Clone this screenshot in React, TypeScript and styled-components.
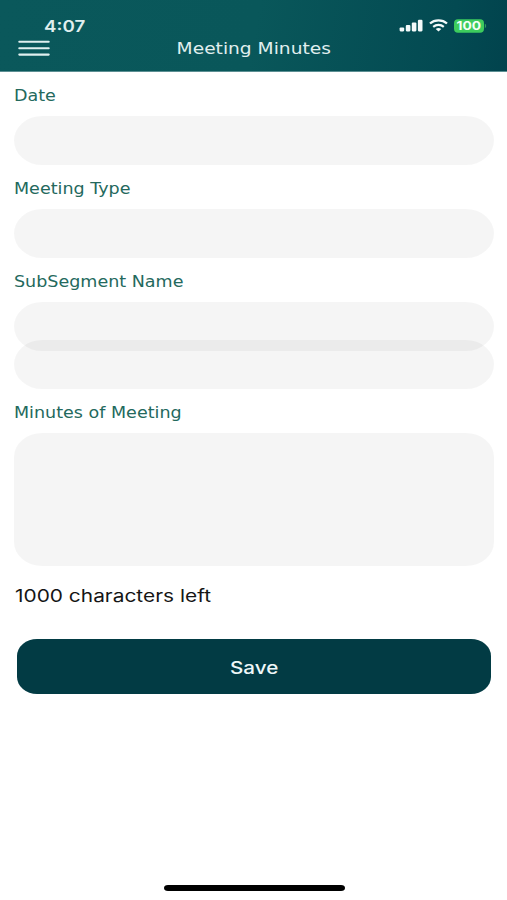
import React from "react";
import styled, { createGlobalStyle } from "styled-components";

const GlobalStyle = createGlobalStyle`
  * { box-sizing: border-box; }
  body { margin: 0; background: #fff; }
`;

const Screen = styled.div`
  width: 507px;
  height: 900px;
  display: flex;
  flex-direction: column;
  overflow: hidden;
  background: #fff;
`;

const Header = styled.header`
  height: 72px;
  flex: none;
  color: #e0efef;
  background: linear-gradient(100deg, #0a585b 0%, #09575a 50%, #034a52 88%, #01434d 100%);
  border-bottom: 1px solid #5c8f93;
`;

const StatusBar = styled.div`
  height: 37px;
  padding: 16px 20px 0 43.5px;
  display: flex;
  justify-content: space-between;
`;

const Wide = styled.span<{ $scale: number }>`
  display: inline-block;
  white-space: nowrap;
  transform: scaleX(${(p) => p.$scale});
  transform-origin: left center;
`;

const Clock = styled(Wide)`
  font: 600 15.6px/21px Inter, sans-serif;
`;

const StatusIcons = styled.div`
  display: flex;
  align-items: flex-start;
  gap: 6px;
  padding-top: 3px;
`;

const NavBar = styled.div`
  display: grid;
  grid-template-columns: 50px 1fr 50px;
  padding: 0 0 0 18px;
  height: 24px;
`;

const MenuButton = styled.button`
  width: 32px;
  height: 20px;
  padding: 0;
  border: 0;
  background: none;
  display: block;
`;

const Title = styled(Wide)`
  font: 400 15.4px/25px "DejaVu Sans", sans-serif;
  transform-origin: center;
  justify-self: center;
  margin-right: 18px;
`;

const Form = styled.main`
  padding: 11px 13px 0 14px;
  display: flex;
  flex-direction: column;
`;

const Field = styled.div<{ $height: number }>`
  height: ${(p) => p.$height}px;
`;

const Label = styled.label`
  display: block;
  height: 33px;
  color: #24695d;
`;

const LabelText = styled(Wide)`
  font: 400 15px/27px "DejaVu Sans", sans-serif;
`;

const Input = styled.input`
  display: block;
  width: 100%;
  height: 49px;
  border: 0;
  outline: 0;
  padding: 0 20px;
  border-radius: 28px / 24.5px;
  background: rgba(0, 0, 0, 0.04);

  & + & {
    margin-top: -11px;
  }
`;

const TextArea = styled.textarea`
  display: block;
  width: 100%;
  height: 133px;
  border: 0;
  outline: 0;
  resize: none;
  padding: 16px 20px;
  border-radius: 28px / 24px;
  background: rgba(0, 0, 0, 0.04);
`;

const Counter = styled.div`
  height: 73px;
  padding: 17px 0 0 0.5px;
  color: #151515;
`;

const CounterText = styled(Wide)`
  font: 400 17.3px/25px Inter, sans-serif;
`;

const SaveButton = styled.button`
  height: 55px;
  margin: 0 3px;
  padding: 2px 0 0;
  border: 0;
  border-radius: 20px / 17px;
  background: #023b44;
  color: #eef7f8;
`;

const SaveText = styled(Wide)`
  font: 500 17.2px/24px Inter, sans-serif;
  transform-origin: center;
`;

const HomeIndicator = styled.div`
  width: 181px;
  height: 6px;
  margin: auto auto 9px 163.5px;
  flex: none;
  border-radius: 4px / 3px;
  background: #000;
`;

const Signal = () => (
  <svg width="24" height="13" viewBox="0 0 24 13" fill="#f3fafa">
    <rect x="0.6" y="8.5" width="4.6" height="3.9" rx="1.1" />
    <rect x="6.8" y="6" width="4.6" height="6.4" rx="1.1" />
    <rect x="12.8" y="3.4" width="4.6" height="9" rx="1.1" />
    <rect x="18.9" y="0.8" width="4.6" height="11.6" rx="1.1" />
  </svg>
);

const Wifi = () => (
  <svg width="19" height="13" viewBox="0 0 19 13" fill="none" stroke="#f3fafa">
    <path d="M1 4.5C5.6.4 13.4.4 18 4.5" strokeWidth="2.3" />
    <path d="M4.2 7.8C7.2 5.3 11.8 5.3 14.8 7.8" strokeWidth="2.2" />
    <path d="M6.7 10C8.4 8.7 10.6 8.7 12.3 10L9.5 12.4Z" fill="#f3fafa" stroke="none" />
  </svg>
);

const Battery = () => (
  <svg width="33" height="15" viewBox="0 0 33 15">
    <rect x="0" y="0.2" width="30" height="13.6" rx="4" fill="#3dcc5d" />
    <path d="M30.8 4.8C32.6 5.4 32.6 8.6 30.8 9.2Z" fill="#2c9c5c" />
    <text
      x="14.8"
      y="11.2"
      textAnchor="middle"
      textLength="24.5"
      lengthAdjust="spacingAndGlyphs"
      fill="#f5fff6"
      fontFamily="Inter, sans-serif"
      fontSize="12"
      fontWeight="700"
    >
      100
    </text>
  </svg>
);

const MenuIcon = () => (
  <svg width="32" height="20" viewBox="0 0 32 20" stroke="#e0efef" strokeWidth="2.1" strokeLinecap="round">
    <path d="M1.3 4.8H30.7M1.3 11.2H30.7M1.3 17.6H30.7" />
  </svg>
);

const FieldLabel = ({ text }: { text: string }) => (
  <Label>
    <LabelText $scale={1.168}>{text}</LabelText>
  </Label>
);

export default function App() {
  return (
    <>
      <GlobalStyle />
      <Screen>
        <Header>
          <StatusBar>
            <Clock $scale={1.2}>4:07</Clock>
            <StatusIcons>
              <Signal />
              <Wifi />
              <Battery />
            </StatusIcons>
          </StatusBar>
          <NavBar>
            <MenuButton aria-label="Menu">
              <MenuIcon />
            </MenuButton>
            <Title $scale={1.21}>Meeting Minutes</Title>
          </NavBar>
        </Header>
        <Form>
          <Field $height={93}>
            <FieldLabel text="Date" />
            <Input />
          </Field>
          <Field $height={93}>
            <FieldLabel text="Meeting Type" />
            <Input />
          </Field>
          <Field $height={131}>
            <FieldLabel text="SubSegment Name" />
            <Input />
            <Input />
          </Field>
          <Field $height={166}>
            <FieldLabel text="Minutes of Meeting" />
            <TextArea />
          </Field>
          <Counter>
            <CounterText $scale={1.208}>1000 characters left</CounterText>
          </Counter>
          <SaveButton>
            <SaveText $scale={1.2}>Save</SaveText>
          </SaveButton>
        </Form>
        <HomeIndicator />
      </Screen>
    </>
  );
}
